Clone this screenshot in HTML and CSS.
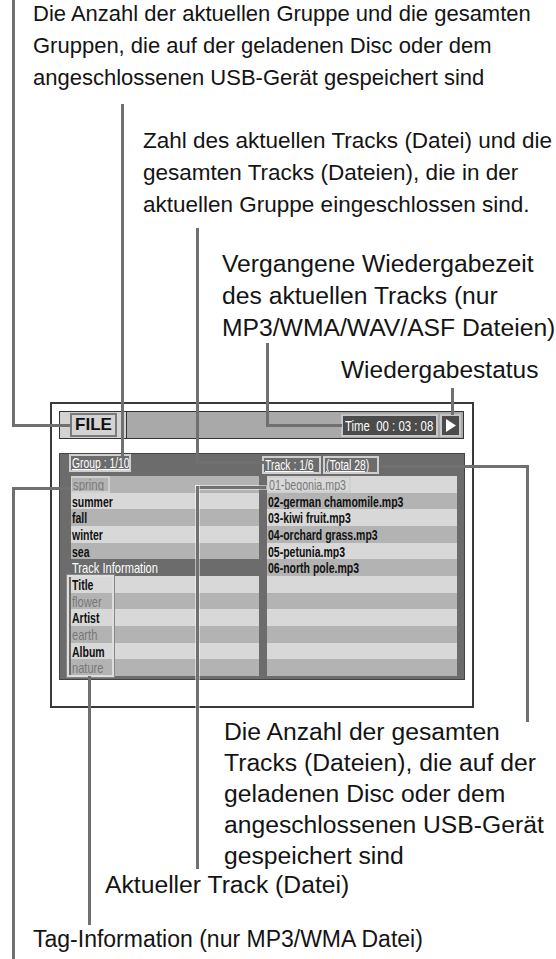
FILE: index.html
```html
<!DOCTYPE html>
<html lang="de">
<head>
<meta charset="utf-8">
<title>Dateianzeige</title>
<link rel="stylesheet" href="styles.css">
</head>
<body>
<div class="canvas">
  <p class="lbl lbl-group">Die Anzahl der aktuellen Gruppe und die gesamten<br>Gruppen, die auf der geladenen Disc oder dem<br>angeschlossenen USB-Gerät gespeichert sind</p>
  <p class="lbl lbl-track">Zahl des aktuellen Tracks (Datei) und die<br>gesamten Tracks (Dateien), die in der<br>aktuellen Gruppe eingeschlossen sind.</p>
  <p class="lbl lbl-time">Vergangene Wiedergabezeit<br>des aktuellen Tracks (nur<br>MP3/WMA/WAV/ASF Dateien)</p>
  <p class="lbl lbl-status">Wiedergabestatus</p>

  <div class="screen">
    <div class="topbar">
      <div class="tb-left"><span class="file">FILE</span></div>
      <div class="tb-mid"></div>
      <div class="tb-right">
        <span class="time"><span class="sq">Time&nbsp; 00 : 03 : 08</span></span>
        <span class="play"><svg width="10" height="13" viewBox="0 0 10 13"><polygon points="0,0 10,6.5 0,13" fill="#fff"/></svg></span>
      </div>
    </div>
    <div class="panel">
      <div class="panel-head">
        <div class="head-left"><span class="frame hd w-group"><span class="sq">Group : 1/10</span></span></div>
        <div class="head-right"><span class="frame hd w-track"><span class="sq">Track : 1/6</span></span><span class="frame hd w-total"><span class="sq">(Total 28)</span></span></div>
      </div>
      <div class="lists">
        <div class="col col-left">
          <div class="row dk"><span class="frame sel w-spring"><span class="sq">spring</span></span></div>
          <div class="row lt"><span class="sq">summer</span></div>
          <div class="row dk"><span class="sq">fall</span></div>
          <div class="row lt"><span class="sq">winter</span></div>
          <div class="row dk"><span class="sq">sea</span></div>
          <div class="row ti"><span class="sq">Track Information</span></div>
          <div class="row lt"><span class="sq">Title</span></div>
          <div class="row dk val"><span class="sq">flower</span></div>
          <div class="row lt"><span class="sq">Artist</span></div>
          <div class="row dk val"><span class="sq">earth</span></div>
          <div class="row lt"><span class="sq">Album</span></div>
          <div class="row dk val"><span class="sq">nature</span></div>
          <div class="tagframe"></div>
        </div>
        <div class="col col-right">
          <div class="row lt"><span class="frame sel w-begonia"><span class="sq">01-begonia.mp3</span></span></div>
          <div class="row dk"><span class="sq">02-german chamomile.mp3</span></div>
          <div class="row lt"><span class="sq">03-kiwi fruit.mp3</span></div>
          <div class="row dk"><span class="sq">04-orchard grass.mp3</span></div>
          <div class="row lt"><span class="sq">05-petunia.mp3</span></div>
          <div class="row dk"><span class="sq">06-north pole.mp3</span></div>
          <div class="row lt"></div>
          <div class="row dk"></div>
          <div class="row lt"></div>
          <div class="row dk"></div>
          <div class="row lt"></div>
          <div class="row dk"></div>
        </div>
      </div>
    </div>
  </div>

  <p class="lbl lbl-total">Die Anzahl der gesamten<br>Tracks (Dateien), die auf der<br>geladenen Disc oder dem<br>angeschlossenen USB-Gerät<br>gespeichert sind</p>
  <p class="lbl lbl-current">Aktueller Track (Datei)</p>
  <p class="lbl lbl-tag">Tag-Information (nur MP3/WMA Datei)</p>

  <div class="ld l1v"></div>
  <div class="ld l1h"></div>
  <div class="ld l2v"></div>
  <div class="ld l3v"></div>
  <div class="ld l3h"></div>
  <div class="ld l4v"></div>
  <div class="ld l4h"></div>
  <div class="ld l5v"></div>
  <div class="ld l6h"></div>
  <div class="ld l6v"></div>
  <div class="ld l7h"></div>
  <div class="ld l7v"></div>
  <div class="ld l8v"></div>
  <div class="ld l9h"></div>
  <div class="ld l9v"></div>
</div>
</body>
</html>
```

FILE: styles.css
```css
html, body {
  margin: 0;
  padding: 0;
  background: #fff;
}
body {
  width: 556px;
  height: 959px;
  overflow: hidden;
  font-family: "Liberation Sans", Arial, sans-serif;
}
.canvas {
  position: relative;
  width: 556px;
  height: 959px;
  overflow: hidden;
}

/* labels */
.lbl {
  position: absolute;
  margin: 0;
  font-size: 24.7px;
  line-height: 32px;
  color: #141414;
  white-space: nowrap;
}
.lbl-group { left: 33px; top: -2px; font-size: 22px; }
.lbl-track { left: 143px; top: 125px; font-size: 22.5px; }
.lbl-time { left: 222px; top: 248px; }
.lbl-status { left: 341px; top: 354px; font-size: 24.5px; }
.lbl-total { left: 224px; top: 716px; line-height: 31px; }
.lbl-current { left: 105px; top: 869px; }
.lbl-tag { left: 33px; top: 923px; font-size: 23px; }

/* leader lines */
.ld {
  position: absolute;
  background: #707070;
}
.l1v { left: 12px; top: 0; width: 3px; height: 427px; }
.l1h { left: 12px; top: 424px; width: 59px; height: 3px; }
.l2v { left: 121px; top: 104px; width: 3px; height: 353px; }
.l3v { left: 196px; top: 228px; width: 3px; height: 236px; }
.l3h { left: 196px; top: 461px; width: 70px; height: 3px; }
.l4v { left: 266px; top: 343px; width: 3px; height: 84px; }
.l4h { left: 266px; top: 424px; width: 76px; height: 3px; }
.l5v { left: 451px; top: 388px; width: 3px; height: 27px; }
.l6h { left: 381px; top: 465px; width: 148px; height: 3px; }
.l6v { left: 526px; top: 465px; width: 3px; height: 257px; }
.l7h { left: 12px; top: 487px; width: 59px; height: 3px; }
.l7v { left: 12px; top: 487px; width: 3px; height: 472px; }
.l8v { left: 88px; top: 676px; width: 3px; height: 249px; }
.l9h { left: 196px; top: 486px; width: 70px; height: 3px; box-shadow: 0 0 0 1px rgba(255,255,255,.5); }
.l9v { left: 196px; top: 486px; width: 3px; height: 383px; box-shadow: 0 0 0 1px rgba(255,255,255,.5); }

/* screen */
.screen {
  position: absolute;
  left: 50px;
  top: 402px;
  width: 424px;
  height: 306px;
  box-sizing: border-box;
  border: 2px solid #3a3a3a;
  background: #fff;
  padding: 7px 0 0 7px;
}
.topbar {
  display: flex;
  width: 405px;
  height: 28px;
  box-sizing: border-box;
  border: 1px solid #333;
  background: #a9a9a9;
}
.tb-left {
  width: 67px;
  box-sizing: border-box;
  background: #d3d3d3;
  border-right: 1px solid #333;
  display: flex;
  align-items: center;
  padding-left: 10px;
}
.file {
  width: 47px;
  height: 24px;
  box-sizing: border-box;
  border: 2px solid #7a7a7a;
  background: #d3d3d3;
  display: flex;
  align-items: center;
  justify-content: center;
  font-weight: bold;
  font-size: 17px;
  color: #111;
}
.tb-mid { flex: 1; }
.tb-right {
  display: flex;
  align-items: center;
  gap: 2px;
  padding-right: 2px;
}
.time, .play {
  height: 23px;
  box-sizing: border-box;
  background: #4b4b4b;
  border: 2px solid #c6c6c6;
  color: #fff;
  display: flex;
  align-items: center;
  overflow: hidden;
}
.time {
  width: 97px;
  padding-left: 2px;
  font-size: 15px;
}
.time .sq { transform: scaleX(0.76); }
.play {
  width: 21px;
  justify-content: center;
}
.sq {
  display: inline-block;
  transform: scaleX(0.74);
  transform-origin: 0 50%;
  white-space: nowrap;
}

/* panel */
.panel {
  margin-top: 14px;
  width: 406px;
  height: 227px;
  box-sizing: border-box;
  background: #6c6c6c;
  border: 1px solid #444;
  padding: 0 7px 4px 11px;
  display: flex;
  flex-direction: column;
}
.panel-head {
  height: 22px;
  display: flex;
  align-items: center;
  gap: 7px;
}
.head-left { width: 188px; margin-left: -2px; }
.head-right { display: flex; gap: 2px; margin-left: -2px; }
.frame {
  display: inline-block;
  box-sizing: border-box;
  border: 2px solid #cfcfcf;
  white-space: nowrap;
  overflow: hidden;
}
.hd {
  color: #fff;
  font-size: 14px;
  line-height: 14px;
  height: 18px;
  padding: 0 1px;
}
.hd .sq { text-decoration: underline; text-underline-offset: 1px; }
.w-group { width: 62px; }
.w-track { width: 59px; }
.w-total { width: 56px; }
.lists {
  display: flex;
  gap: 8px;
  height: 200px;
}
.col {
  position: relative;
  display: grid;
  grid-template-rows: repeat(12, 1fr);
}
.col-left { width: 188px; }
.col-right { width: 190px; }
.row {
  display: flex;
  align-items: center;
  padding-left: 1px;
  font-size: 15px;
  font-weight: bold;
  color: #111;
  overflow: hidden;
}
.row .sq { transform: scaleX(0.7); }
.row.lt { background: #d8d8d8; }
.row.dk { background: #b3b3b3; }
.row.ti { background: #6c6c6c; color: #fff; font-weight: normal; }
.row.val { color: #777; font-weight: normal; }
.row.ti .sq, .row.val .sq { transform: scaleX(0.74); }
.sel {
  color: #7a7a7a;
  font-weight: normal;
  height: 17px;
  line-height: 13px;
  margin-left: -2px;
  padding-left: 1px;
}
.row .sel .sq { transform: scaleX(0.76); }
.row .w-begonia .sq { transform: scaleX(0.71); }
.w-spring { width: 40px; }
.w-begonia { width: 85px; }
.tagframe {
  position: absolute;
  left: -4px;
  top: 99px;
  width: 47px;
  height: 102px;
  box-sizing: border-box;
  border: 2px solid #dedede;
  outline: 1px solid #888;
}
```
